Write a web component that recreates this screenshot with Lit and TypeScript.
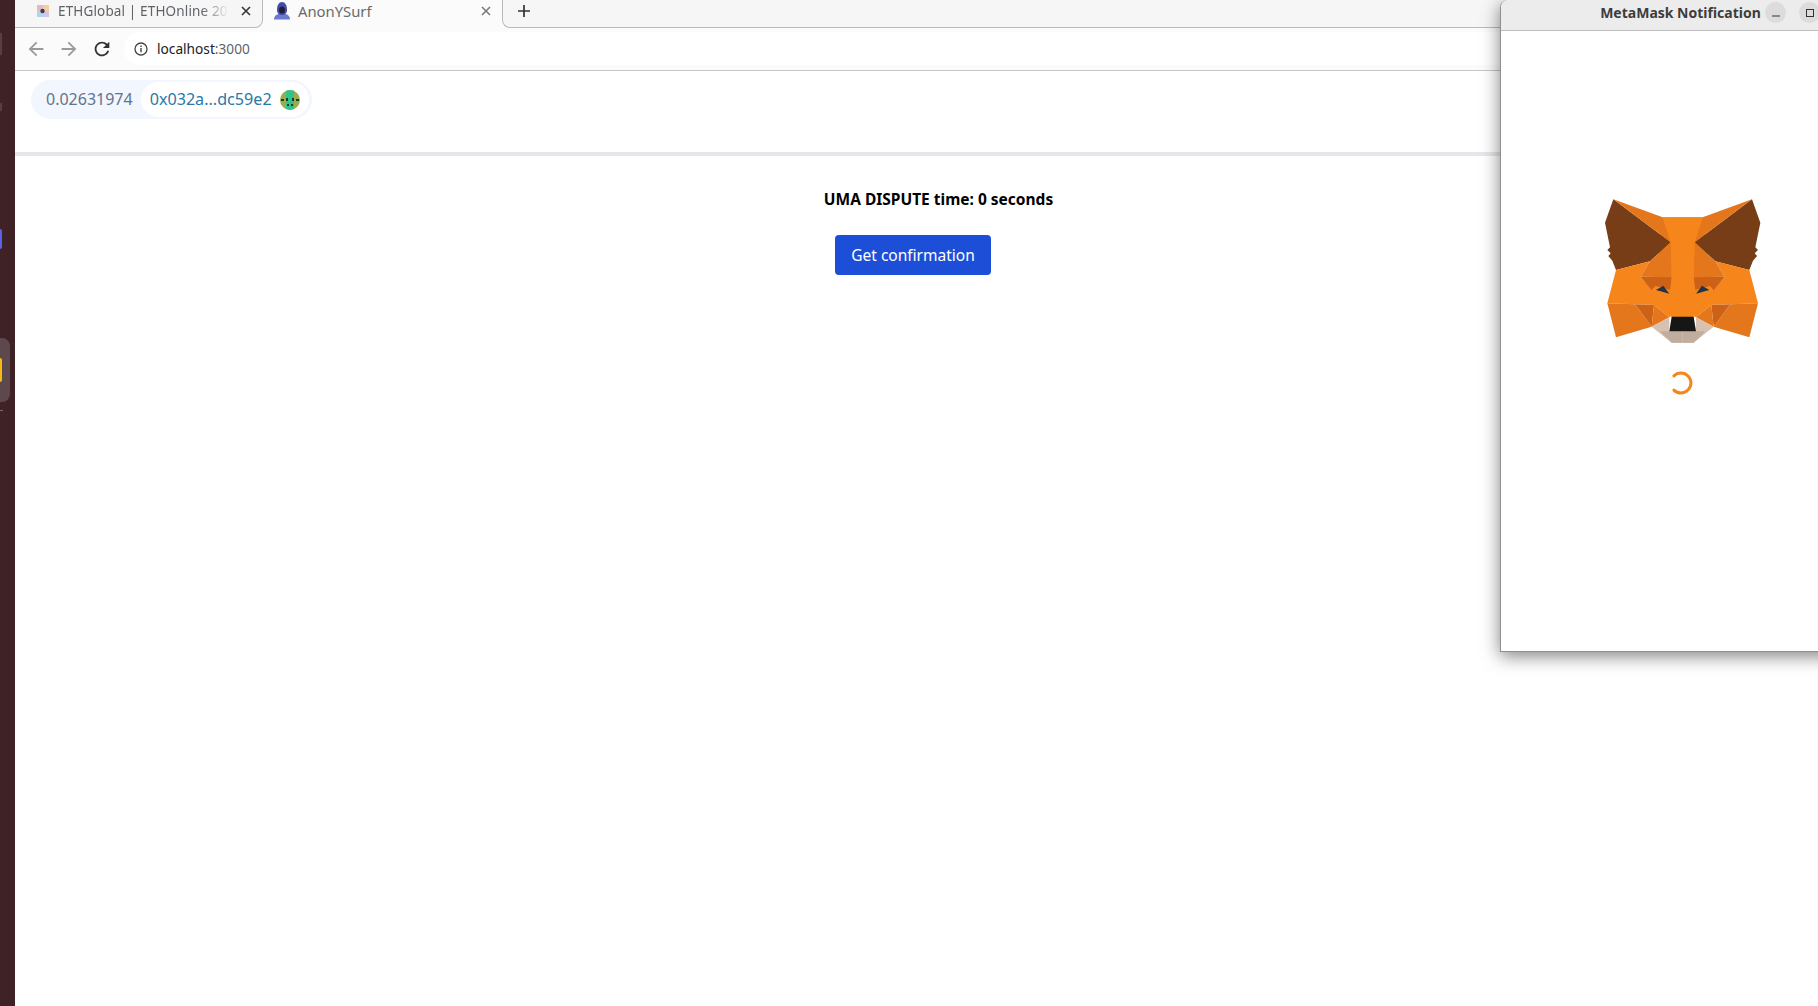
import { LitElement, html, css, svg } from "lit";
import { customElement } from "lit/decorators.js";

type Poly = [string, string];
const half: Poly[] = [
  ["#763d16", "100,28 75,98 90,172 82,180 92,190 85,198 97,212 108,240 210,214 272,157"],
  ["#e4761b", "100,28 272,157 248,82"],
  ["#f6851b", "82,340 108,240 210,214 182,260 218,302 228,345 165,343"],
  ["#e4761b", "210,214 272,157 275,262 182,260"],
  ["#cd6116", "182,260 275,262 270,300 226,288 216,302"],
  ["#f6851b", "216,302 226,288 270,300 272,380 268,382 222,345"],
  ["#233447", "228,300 250,287 268,311"],
  ["#e4761b", "82,340 165,343 215,410 108,442"],
  ["#cd6116", "165,343 222,345 215,410"],
  ["#e4761b", "222,345 268,382 215,410"],
  ["#d7c1b3", "215,410 268,382 268,424 308,424 308,458 275,458"],
  ["#c0ad9e", "240,424 308,424 308,458 275,458"],
];

@customElement("app-root")
export class AppRoot extends LitElement {
  static styles = css`
    :host {
      display: flex;
      position: relative;
      width: 1818px;
      height: 1006px;
      overflow: hidden;
      background: #fff;
      font-family: "Noto Sans", "Liberation Sans", sans-serif;
    }
    .dock {
      width: 15px;
      flex: none;
      background: #3e2225;
      display: flex;
      flex-direction: column;
    }
    .dock i { display: block; }
    .mark { width: 2px; height: 22px; margin-top: 33px; background: #55403f; }
    .mark.short { height: 8px; margin-top: 48px; }
    .blue { width: 2px; height: 20px; margin-top: 118px; background: #5a63e8; border-radius: 0 12px 12px 0; }
    .slot {
      width: 10px;
      height: 64px;
      margin-top: 89px;
      background: #5c484d;
      border-radius: 0 8px 8px 0;
      display: flex;
      align-items: center;
    }
    .slot i { width: 2px; height: 24px; background: #f5b915; border-radius: 0 12px 12px 0; }
    .dock .tick { width: 3px; height: 1px; margin-top: 8px; background: #7a6a6c; }
    .browser { flex: 1; min-width: 0; display: flex; flex-direction: column; }
    .strip { display: flex; height: 28px; background: #fbfbfb; flex: none; }
    .tab {
      display: flex;
      align-items: center;
      height: 28px;
      box-sizing: border-box;
      font-size: 13.5px;
      color: #5f6368;
      flex: none;
      padding-bottom: 6px;
    }
    .tab.off {
      width: 248px;
      padding-left: 21px;
      background: #f6f6f6;
      border-bottom: 1px solid #b9b9b9;
      border-right: 1px solid #b9b9b9;
      border-bottom-right-radius: 8px;
    }
    .tab.on { width: 239px; padding-left: 10px; }
    .tab svg { flex: none; }
    .label { margin-left: 8px; white-space: nowrap; flex: 1; min-width: 0; }
    .off .label {
      letter-spacing: 0.15px;
      -webkit-mask-image: linear-gradient(90deg, #000 84%, transparent 100%);
      mask-image: linear-gradient(90deg, #000 84%, transparent 100%);
    }
    .on .label { color: #6a6a6a; margin-left: 7px; font-size: 14.8px; }
    .x { flex: none; width: 12px; height: 12px; margin: 0 10px 0 11px; }
    .rest {
      flex: 1;
      display: flex;
      align-items: center;
      padding-left: 13px;
      padding-bottom: 5px;
      background: #f6f6f6;
      border-bottom: 1px solid #b9b9b9;
      border-left: 1px solid #b9b9b9;
      border-bottom-left-radius: 8px;
      box-sizing: border-box;
    }
    .toolbar {
      height: 43px;
      box-sizing: border-box;
      flex: none;
      background: #fbfbfb;
      border-bottom: 1px solid #c6c6c6;
      display: flex;
      align-items: center;
      padding: 0 0 1px 10px;
      gap: 11px;
    }
    .nav { width: 22px; height: 22px; flex: none; }
    .url {
      flex: 1;
      height: 33px;
      margin-right: 300px;
      background: #fff;
      border-radius: 17px;
      display: flex;
      align-items: center;
      padding-left: 10px;
      font-size: 13.7px;
      color: #202124;
      gap: 9px;
    }
    .url span span { color: #5f6368; }
    .acct {
      height: 81px;
      box-sizing: border-box;
      padding: 9px 0 0 16px;
      flex: none;
    }
    .pill {
      display: inline-flex;
      align-items: center;
      height: 39px;
      box-sizing: border-box;
      padding: 2px 3px 2px 15px;
      background: #f1f6ff;
      border-radius: 20px;
      font-size: 16px;
      line-height: 20px;
    }
    .bal { color: #64748b; margin-right: 8px; padding-bottom: 2px; }
    .addr {
      display: flex;
      align-items: center;
      gap: 8px;
      height: 35px;
      padding: 0 9px;
      background: #fff;
      border-radius: 18px;
      color: #2a78a6;
    }
    .addr span { padding-bottom: 2px; font-size: 16.15px; }
    .rule { height: 4px; background: #e5e7eb; flex: none; }
    .main {
      display: flex;
      flex-direction: column;
      align-items: center;
      padding-top: 32px;
    }
    .main h2 {
      margin: 0 0 25px 44px;
      font-size: 15.5px;
      line-height: 22px;
      font-weight: 700;
      color: #000;
    }
    .main button {
      width: 156px;
      height: 40px;
      margin-right: 7px;
      border: 0;
      border-radius: 4px;
      background: #1d4ed8;
      color: #fff;
      font: 15.5px "Noto Sans", sans-serif;
      padding: 0;
    }
    .win {
      position: absolute;
      left: 1500px;
      top: 0;
      width: 360px;
      height: 652px;
      box-sizing: border-box;
      background: #fff;
      border-left: 1px solid #8f8f8f;
      border-bottom: 1px solid #8f8f8f;
      border-top-left-radius: 8px;
      box-shadow: 0 4px 18px rgba(0, 0, 0, 0.5);
      display: flex;
      flex-direction: column;
      align-items: center;
    }
    .title {
      position: relative;
      align-self: stretch;
      height: 31px;
      box-sizing: border-box;
      padding-bottom: 6px;
      background: #ececec;
      border-bottom: 1px solid #bdbdbd;
      border-top-left-radius: 8px;
      display: flex;
      align-items: center;
      justify-content: center;
      font-size: 14px;
      font-weight: 700;
      color: #3d3d3d;
    }
    .ctl {
      position: absolute;
      top: 2px;
      width: 21px;
      height: 21px;
      border-radius: 50%;
      background: #dcdcdc;
      display: flex;
      align-items: center;
      justify-content: center;
    }
    .ctl.min { left: 264px; }
    .ctl.max { left: 298px; }
    .fox { margin: 159px 1px 0 0; display: block; }
    .spin { margin: 10px 0 0 0; display: block; }
  `;

  private fox() {
    return html`<svg class="fox" width="200" height="170" viewBox="0 0 600 510">
      <polygon fill="#f6851b" points="248,82 368,82 400,340 308,400 216,340" />
      ${half.map((p) => svg`<polygon fill=${p[0]} points=${p[1]} />`)}
      <g transform="matrix(-1 0 0 1 616 0)">
        ${half.map((p) => svg`<polygon fill=${p[0]} points=${p[1]} />`)}
      </g>
      <polygon fill="#f6851b" points="248,82 368,82 344,157 341,262 344,380 272,380 275,262 272,157" />
      <polygon fill="#161616" points="275,380 341,380 348,424 268,424" />
    </svg>`;
  }

  render() {
    return html`
      <div class="dock">
        <i class="mark"></i><i class="mark short"></i><i class="blue"></i>
        <div class="slot"><i></i></div>
        <i class="tick"></i>
      </div>
      <div class="browser">
        <div class="strip">
          <div class="tab off">
            <svg width="14" height="14" viewBox="0 0 14 14">
              <rect x="1" y="1" width="6" height="6" fill="#e8b7c4" />
              <rect x="7" y="1" width="6" height="6" fill="#f0d09e" />
              <rect x="1" y="7" width="6" height="6" fill="#b6d3ee" />
              <rect x="7" y="7" width="6" height="6" fill="#d7c3e8" />
              <circle cx="6.5" cy="7" r="2.200" fill="#33405e" />
            </svg>
            <span class="label">ETHGlobal | ETHOnline 20</span>
            <svg class="x" viewBox="0 0 12 12"><path d="M2 2l8 8M10 2l-8 8" stroke="#333" stroke-width="1.6" /></svg>
          </div>
          <div class="tab on">
            <svg width="18" height="20" viewBox="0 0 18 20">
              <path d="M1 18.500c0-3 1.500-4.500 4.500-5.500h7c3 1 4.500 2.500 4.500 5.500z" fill="#6d78d0" />
              <path d="M4 9c0-5 2-8 5-8s5 3 5 8c0 3-2 5-5 5s-5-2-5-5z" fill="#444aa8" />
              <ellipse cx="9" cy="9" rx="3" ry="3.600" fill="#241f38" />
            </svg>
            <span class="label">AnonYSurf</span>
            <svg class="x" viewBox="0 0 12 12"><path d="M2 2l8 8M10 2l-8 8" stroke="#777" stroke-width="1.5" /></svg>
          </div>
          <div class="rest">
            <svg width="16" height="16" viewBox="0 0 16 16"><path d="M8 2v12M2 8h12" stroke="#333" stroke-width="1.7" /></svg>
          </div>
        </div>
        <div class="toolbar">
          <svg class="nav" viewBox="0 0 24 24"><path fill="#9a9a9a" d="M20 11H7.830l5.590-5.590L12 4l-8 8 8 8 1.410-1.410L7.830 13H20v-2z" /></svg>
          <svg class="nav" viewBox="0 0 24 24"><path fill="#9a9a9a" d="M4 11h12.170l-5.590-5.590L12 4l8 8-8 8-1.410-1.410L16.170 13H4v-2z" /></svg>
          <svg class="nav" viewBox="0 0 24 24"><path fill="#333" d="M17.650 6.350C16.200 4.900 14.210 4 12 4c-4.420 0-7.990 3.580-7.990 8s3.570 8 7.990 8c3.730 0 6.840-2.550 7.730-6h-2.080c-.82 2.330-3.040 4-5.650 4-3.310 0-6-2.690-6-6s2.690-6 6-6c1.660 0 3.140.69 4.220 1.780L13 11h7V4l-2.350 2.350z" /></svg>
          <div class="url">
            <svg width="14" height="14" viewBox="0 0 14 14">
              <circle cx="7" cy="7" r="6" fill="none" stroke="#444" stroke-width="1.3" />
              <path d="M7 6v4.200M7 3.600v1.400" stroke="#444" stroke-width="1.4" />
            </svg>
            <span>localhost<span>:3000</span></span>
          </div>
        </div>
        <div class="acct">
          <div class="pill">
            <span class="bal">0.02631974</span>
            <div class="addr">
              <span>0x032a...dc59e2</span>
              <svg width="20" height="20" viewBox="0 0 20 20">
                <defs><clipPath id="c"><circle cx="10" cy="10" r="10" /></clipPath></defs>
                <g clip-path="url(#c)">
                  <rect width="20" height="20" fill="#9aad4a" />
                  <rect x="6" width="8" height="20" fill="#2fc48d" />
                  <rect x="1" y="9" width="3" height="2" fill="#1d3a24" />
                  <rect x="6" y="8" width="2" height="3" fill="#1d3a24" />
                  <rect x="12" y="8" width="2" height="3" fill="#1d3a24" />
                  <rect x="16" y="9" width="3" height="2" fill="#1d3a24" />
                  <rect x="7" y="14" width="2" height="2" fill="#1d3a24" />
                  <rect x="11" y="14" width="2" height="2" fill="#1d3a24" />
                </g>
              </svg>
            </div>
          </div>
        </div>
        <div class="rule"></div>
        <div class="main">
          <h2>UMA DISPUTE time: 0 seconds</h2>
          <button>Get confirmation</button>
        </div>
      </div>
      <div class="win">
        <div class="title">
          MetaMask Notification
          <span class="ctl min"><svg width="10" height="10" viewBox="0 0 10 10"><path d="M1 8h8" stroke="#333" stroke-width="1" /></svg></span>
          <span class="ctl max"><svg width="10" height="10" viewBox="0 0 10 10"><rect x="1.500" y="1.500" width="7" height="7" fill="none" stroke="#333" stroke-width="1" /></svg></span>
        </div>
        ${this.fox()}
        <svg class="spin" width="26" height="26" viewBox="0 0 26 26">
          <path d="M5.900 5.900A10 10 0 1 1 5.900 20.100" fill="none" stroke="#f6851b" stroke-width="3" stroke-linecap="round" />
        </svg>
      </div>
    `;
  }
}
